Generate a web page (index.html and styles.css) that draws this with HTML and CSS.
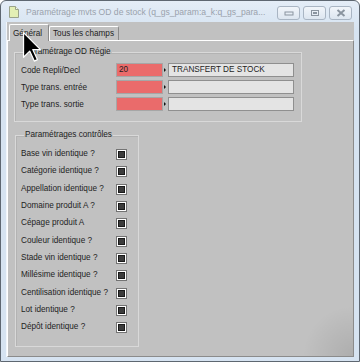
FILE: index.html
```html
<!DOCTYPE html>
<html lang="fr">
<head>
  <meta charset="UTF-8" />
  <title>Paramétrage mvts OD de stock</title>
  <link rel="stylesheet" href="styles.css">
</head>
<body>
  <div class="window">
    <div class="titlebar">
      <svg class="app-icon" width="10" height="12" viewBox="0 0 10 12">
        <path d="M0.5 0.5 H6.5 L9.5 3.5 V11.5 H0.5 Z" fill="#e3efb4" stroke="#9aa38a"/>
        <path d="M6.5 0.5 V3.5 H9.5" fill="#f6f9e6" stroke="#9aa38a"/>
      </svg>
      <span class="title">Paramétrage mvts OD de stock (q_gs_param:a_k:q_gs_para...</span>
      <div class="caption-buttons">
        <span class="cbtn">
          <svg width="10" height="6" viewBox="0 0 10 6"><rect x="1" y="2" width="8" height="3" fill="none" stroke="#8a949f"/></svg>
        </span>
        <span class="cbtn">
          <svg width="10" height="8" viewBox="0 0 10 8"><rect x="1.5" y="1.5" width="7" height="5" fill="none" stroke="#8a949f"/><rect x="3" y="3" width="4" height="2" fill="#8a949f"/></svg>
        </span>
        <span class="cbtn">
          <svg width="10" height="8" viewBox="0 0 10 8"><path d="M1.5 1 L8.5 7 M8.5 1 L1.5 7" stroke="#8a949f" stroke-width="2"/></svg>
        </span>
      </div>
    </div>

    <div class="client">
      <div class="tabs">
        <div class="tab active">Général</div>
        <div class="tab">Tous les champs</div>
      </div>

      <div class="panel">
        <fieldset class="group group-regie">
          <legend>Paramétrage OD Régie</legend>
          <div class="field-row">
            <label>Code Repli/Decl</label>
            <span class="code">20</span>
            <span class="arrow"></span>
            <span class="libelle">TRANSFERT DE STOCK</span>
          </div>
          <div class="field-row">
            <label>Type trans. entrée</label>
            <span class="code"></span>
            <span class="arrow"></span>
            <span class="libelle"></span>
          </div>
          <div class="field-row">
            <label>Type trans. sortie</label>
            <span class="code"></span>
            <span class="arrow"></span>
            <span class="libelle"></span>
          </div>
        </fieldset>

        <fieldset class="group group-controles">
          <legend>Paramétrages contrôles</legend>
          <div class="check-row"><label>Base vin identique ?</label><span class="check"></span></div>
          <div class="check-row"><label>Catégorie identique ?</label><span class="check"></span></div>
          <div class="check-row"><label>Appellation identique ?</label><span class="check"></span></div>
          <div class="check-row"><label>Domaine produit A ?</label><span class="check"></span></div>
          <div class="check-row"><label>Cépage produit A</label><span class="check"></span></div>
          <div class="check-row"><label>Couleur identique ?</label><span class="check"></span></div>
          <div class="check-row"><label>Stade vin identique ?</label><span class="check"></span></div>
          <div class="check-row"><label>Millésime identique ?</label><span class="check"></span></div>
          <div class="check-row"><label>Centilisation identique ?</label><span class="check"></span></div>
          <div class="check-row"><label>Lot identique ?</label><span class="check"></span></div>
          <div class="check-row"><label>Dépôt identique ?</label><span class="check"></span></div>
        </fieldset>
      </div>
    </div>

    <svg class="cursor" width="20" height="31" viewBox="-1 -1 13 20">
      <path d="M0 0 L0 16 L4 12 L7 18.5 L9 17.5 L6 11 L11 11 Z" fill="#000" stroke="#fff" stroke-width="0.8" stroke-linejoin="round"/>
    </svg>
  </div>
</body>
</html>
```

FILE: styles.css
```css
body {
  margin: 0;
  background: #ffffff;
  font-family: 'Liberation Sans', Arial, sans-serif;
  font-size: 8.2px;
  color: #1e1e1e;
}

.window {
  position: relative;
  width: 360px;
  height: 362px;
  box-sizing: border-box;
  border: 1px solid #5e6771;
  border-radius: 6px 6px 0 0;
  background: linear-gradient(#e4edf7, #d6e3f1 30px);
  display: flex;
  flex-direction: column;
}

.titlebar {
  height: 21px;
  display: flex;
  align-items: center;
  padding: 0 7px 0 8px;
}

.app-icon {
  margin-top: 1px;
  flex: none;
}

.title {
  margin-left: 7px;
  font-size: 8.6px;
  color: #9aa2ac;
  white-space: nowrap;
  flex: 1;
  overflow: hidden;
}

.caption-buttons {
  display: flex;
  gap: 3px;
  margin-top: 2px;
}

.cbtn {
  width: 21px;
  height: 12px;
  border: 1px solid #a9b5c3;
  border-radius: 3px;
  background: linear-gradient(#f1f5fa, #dde6f0);
  display: grid;
  place-items: center;
}

.client {
  margin: 0 5px 4px 6px;
  flex: 1;
  display: flex;
  flex-direction: column;
  background: #c1c1c1;
  box-shadow: -1px 0 0 #f2f6fb;
}

.tabs {
  height: 18px;
  display: flex;
  align-items: flex-end;
  padding-left: 2px;
}

.tab {
  height: 13px;
  line-height: 13px;
  padding: 0 4px 0 3px;
  border: 1px solid #ffffff;
  border-right-color: #8a8a8a;
  border-bottom: none;
  border-radius: 2px 2px 0 0;
  background: #c1c1c1;
  white-space: nowrap;
}

.tab.active {
  height: 16px;
  line-height: 17px;
  padding: 0 5px 0 3px;
  position: relative;
  z-index: 1;
  margin-bottom: -1px;
  width: 30px;
}

.panel {
  flex: 1;
  border: 1px solid #ffffff;
  border-right-color: #8b8b8b;
  border-bottom-color: #8b8b8b;
  background: radial-gradient(circle at 100% 100%, rgba(0, 0, 0, 0.1), rgba(0, 0, 0, 0) 50px), #c1c1c1;
  display: flex;
  flex-direction: column;
  align-items: flex-start;
}

.group {
  margin: 0;
  border: 1px solid #d9d9d9;
  box-shadow: inset 1px 1px 0 #b3b3b3;
  box-sizing: border-box;
}

.group legend {
  padding: 0 1px;
  margin-left: 3px;
  line-height: 10px;
}

.group-regie {
  margin: 6px 0 0 6px;
  width: 288px;
  height: 75px;
  padding: 6px 0 0 6px;
  display: flex;
  flex-direction: column;
  gap: 3px;
}

.field-row {
  display: flex;
  align-items: center;
  height: 14px;
}

.field-row label {
  width: 95px;
}

.code {
  height: 12px;
  line-height: 12px;
  padding-left: 2px;
  border: 1px solid #a6a6a6;
  background: #ea6b6b;
  width: 43px;
}

.arrow {
  width: 0;
  height: 0;
  margin: 0 2px 0 1px;
  border-top: 2px solid transparent;
  border-bottom: 2px solid transparent;
  border-left: 2px solid #111;
}

.libelle {
  width: 121px;
  height: 12px;
  line-height: 12px;
  padding-left: 3px;
  border: 1px solid #8f8f8f;
  background: #e4e4e4;
}

.group-controles {
  margin: 8px 0 0 7px;
  width: 124px;
  height: 217px;
  padding: 5px 0 0 5px;
}

.check-row {
  display: flex;
  align-items: center;
  height: 17.34px;
}

.check-row label {
  width: 95px;
  white-space: nowrap;
}

.check {
  width: 9px;
  height: 9px;
  border: 1px solid #737373;
  background: #ffffff;
  display: grid;
  place-items: center;
  margin-top: 2px;
}

.check::after {
  content: "";
  width: 5px;
  height: 5px;
  border: 1px solid #1a1a1a;
  background: #3c3c3c;
}

.cursor {
  position: absolute;
  left: 21px;
  top: 30px;
  z-index: 5;
}
```
